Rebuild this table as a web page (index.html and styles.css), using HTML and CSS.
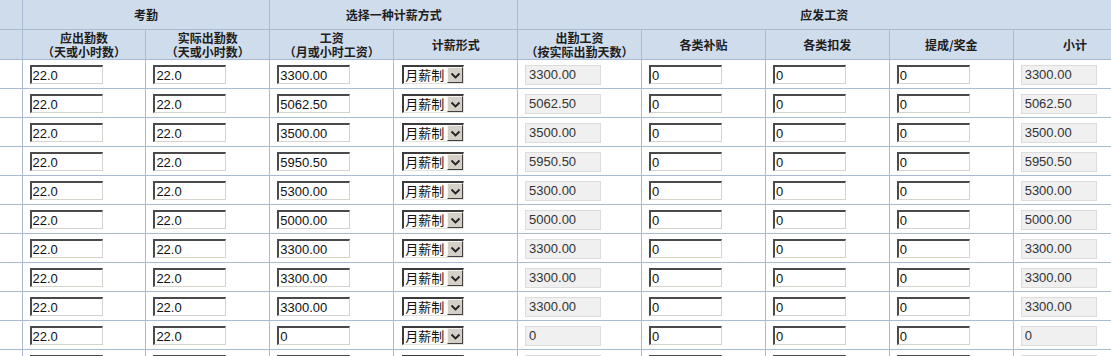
FILE: index.html
```html
<!DOCTYPE html>
<html lang="zh-CN">
<head>
<meta charset="utf-8">
<title>工资表</title>
<link rel="stylesheet" href="styles.css">
</head>
<body>
<table class="pay">
  <colgroup>
    <col class="c-first">
    <col class="c-std"><col class="c-std"><col class="c-std"><col class="c-std">
    <col class="c-std"><col class="c-std"><col class="c-std"><col class="c-std"><col class="c-std">
  </colgroup>
  <thead>
    <tr class="h1">
      <th class="first"></th>
      <th colspan="2">考勤</th>
      <th colspan="2">选择一种计薪方式</th>
      <th colspan="5" class="pay-title"><span>应发工资</span></th>
    </tr>
    <tr class="h2">
      <th class="first"></th>
      <th>应出勤数<br>（天或小时数）</th>
      <th>实际出勤数<br>（天或小时数）</th>
      <th>工资<br>（月或小时工资）</th>
      <th>计薪形式</th>
      <th>出勤工资<br>（按实际出勤天数）</th>
      <th>各类补贴</th>
      <th>各类扣发</th>
      <th>提成/奖金</th>
      <th>小计</th>
    </tr>
  </thead>
  <tbody>
    <tr>
      <td class="first"></td>
      <td><input class="in" value="22.0"></td>
      <td><input class="in" value="22.0"></td>
      <td><input class="in" value="3300.00"></td>
      <td><span class="sel"><span class="sel-text">月薪制</span><span class="sel-btn"><svg width="11" height="7" viewBox="0 0 11 7"><path d="M1.5 1.5 L5.5 5.5 L9.5 1.5" fill="none" stroke="#222" stroke-width="1.8"/></svg></span></span></td>
      <td><input class="in ro" value="3300.00" readonly></td>
      <td><input class="in" value="0"></td>
      <td><input class="in" value="0"></td>
      <td><input class="in" value="0"></td>
      <td><input class="in ro" value="3300.00" readonly></td>
    </tr>
    <tr>
      <td class="first"></td>
      <td><input class="in" value="22.0"></td>
      <td><input class="in" value="22.0"></td>
      <td><input class="in" value="5062.50"></td>
      <td><span class="sel"><span class="sel-text">月薪制</span><span class="sel-btn"><svg width="11" height="7" viewBox="0 0 11 7"><path d="M1.5 1.5 L5.5 5.5 L9.5 1.5" fill="none" stroke="#222" stroke-width="1.8"/></svg></span></span></td>
      <td><input class="in ro" value="5062.50" readonly></td>
      <td><input class="in" value="0"></td>
      <td><input class="in" value="0"></td>
      <td><input class="in" value="0"></td>
      <td><input class="in ro" value="5062.50" readonly></td>
    </tr>
    <tr>
      <td class="first"></td>
      <td><input class="in" value="22.0"></td>
      <td><input class="in" value="22.0"></td>
      <td><input class="in" value="3500.00"></td>
      <td><span class="sel"><span class="sel-text">月薪制</span><span class="sel-btn"><svg width="11" height="7" viewBox="0 0 11 7"><path d="M1.5 1.5 L5.5 5.5 L9.5 1.5" fill="none" stroke="#222" stroke-width="1.8"/></svg></span></span></td>
      <td><input class="in ro" value="3500.00" readonly></td>
      <td><input class="in" value="0"></td>
      <td><input class="in" value="0"></td>
      <td><input class="in" value="0"></td>
      <td><input class="in ro" value="3500.00" readonly></td>
    </tr>
    <tr>
      <td class="first"></td>
      <td><input class="in" value="22.0"></td>
      <td><input class="in" value="22.0"></td>
      <td><input class="in" value="5950.50"></td>
      <td><span class="sel"><span class="sel-text">月薪制</span><span class="sel-btn"><svg width="11" height="7" viewBox="0 0 11 7"><path d="M1.5 1.5 L5.5 5.5 L9.5 1.5" fill="none" stroke="#222" stroke-width="1.8"/></svg></span></span></td>
      <td><input class="in ro" value="5950.50" readonly></td>
      <td><input class="in" value="0"></td>
      <td><input class="in" value="0"></td>
      <td><input class="in" value="0"></td>
      <td><input class="in ro" value="5950.50" readonly></td>
    </tr>
    <tr>
      <td class="first"></td>
      <td><input class="in" value="22.0"></td>
      <td><input class="in" value="22.0"></td>
      <td><input class="in" value="5300.00"></td>
      <td><span class="sel"><span class="sel-text">月薪制</span><span class="sel-btn"><svg width="11" height="7" viewBox="0 0 11 7"><path d="M1.5 1.5 L5.5 5.5 L9.5 1.5" fill="none" stroke="#222" stroke-width="1.8"/></svg></span></span></td>
      <td><input class="in ro" value="5300.00" readonly></td>
      <td><input class="in" value="0"></td>
      <td><input class="in" value="0"></td>
      <td><input class="in" value="0"></td>
      <td><input class="in ro" value="5300.00" readonly></td>
    </tr>
    <tr>
      <td class="first"></td>
      <td><input class="in" value="22.0"></td>
      <td><input class="in" value="22.0"></td>
      <td><input class="in" value="5000.00"></td>
      <td><span class="sel"><span class="sel-text">月薪制</span><span class="sel-btn"><svg width="11" height="7" viewBox="0 0 11 7"><path d="M1.5 1.5 L5.5 5.5 L9.5 1.5" fill="none" stroke="#222" stroke-width="1.8"/></svg></span></span></td>
      <td><input class="in ro" value="5000.00" readonly></td>
      <td><input class="in" value="0"></td>
      <td><input class="in" value="0"></td>
      <td><input class="in" value="0"></td>
      <td><input class="in ro" value="5000.00" readonly></td>
    </tr>
    <tr>
      <td class="first"></td>
      <td><input class="in" value="22.0"></td>
      <td><input class="in" value="22.0"></td>
      <td><input class="in" value="3300.00"></td>
      <td><span class="sel"><span class="sel-text">月薪制</span><span class="sel-btn"><svg width="11" height="7" viewBox="0 0 11 7"><path d="M1.5 1.5 L5.5 5.5 L9.5 1.5" fill="none" stroke="#222" stroke-width="1.8"/></svg></span></span></td>
      <td><input class="in ro" value="3300.00" readonly></td>
      <td><input class="in" value="0"></td>
      <td><input class="in" value="0"></td>
      <td><input class="in" value="0"></td>
      <td><input class="in ro" value="3300.00" readonly></td>
    </tr>
    <tr>
      <td class="first"></td>
      <td><input class="in" value="22.0"></td>
      <td><input class="in" value="22.0"></td>
      <td><input class="in" value="3300.00"></td>
      <td><span class="sel"><span class="sel-text">月薪制</span><span class="sel-btn"><svg width="11" height="7" viewBox="0 0 11 7"><path d="M1.5 1.5 L5.5 5.5 L9.5 1.5" fill="none" stroke="#222" stroke-width="1.8"/></svg></span></span></td>
      <td><input class="in ro" value="3300.00" readonly></td>
      <td><input class="in" value="0"></td>
      <td><input class="in" value="0"></td>
      <td><input class="in" value="0"></td>
      <td><input class="in ro" value="3300.00" readonly></td>
    </tr>
    <tr>
      <td class="first"></td>
      <td><input class="in" value="22.0"></td>
      <td><input class="in" value="22.0"></td>
      <td><input class="in" value="3300.00"></td>
      <td><span class="sel"><span class="sel-text">月薪制</span><span class="sel-btn"><svg width="11" height="7" viewBox="0 0 11 7"><path d="M1.5 1.5 L5.5 5.5 L9.5 1.5" fill="none" stroke="#222" stroke-width="1.8"/></svg></span></span></td>
      <td><input class="in ro" value="3300.00" readonly></td>
      <td><input class="in" value="0"></td>
      <td><input class="in" value="0"></td>
      <td><input class="in" value="0"></td>
      <td><input class="in ro" value="3300.00" readonly></td>
    </tr>
    <tr>
      <td class="first"></td>
      <td><input class="in" value="22.0"></td>
      <td><input class="in" value="22.0"></td>
      <td><input class="in" value="0"></td>
      <td><span class="sel"><span class="sel-text">月薪制</span><span class="sel-btn"><svg width="11" height="7" viewBox="0 0 11 7"><path d="M1.5 1.5 L5.5 5.5 L9.5 1.5" fill="none" stroke="#222" stroke-width="1.8"/></svg></span></span></td>
      <td><input class="in ro" value="0" readonly></td>
      <td><input class="in" value="0"></td>
      <td><input class="in" value="0"></td>
      <td><input class="in" value="0"></td>
      <td><input class="in ro" value="0" readonly></td>
    </tr>
    <tr>
      <td class="first"></td>
      <td><input class="in" value="22.0"></td>
      <td><input class="in" value="22.0"></td>
      <td><input class="in" value="3300.00"></td>
      <td><span class="sel"><span class="sel-text">月薪制</span><span class="sel-btn"><svg width="11" height="7" viewBox="0 0 11 7"><path d="M1.5 1.5 L5.5 5.5 L9.5 1.5" fill="none" stroke="#222" stroke-width="1.8"/></svg></span></span></td>
      <td><input class="in ro" value="3300.00" readonly></td>
      <td><input class="in" value="0"></td>
      <td><input class="in" value="0"></td>
      <td><input class="in" value="0"></td>
      <td><input class="in ro" value="3300.00" readonly></td>
    </tr>
  </tbody>
</table>
</body>
</html>
```

FILE: styles.css
```css
html, body {
  margin: 0;
  padding: 0;
  overflow: hidden;
  background: #ffffff;
}

body {
  font-family: "Liberation Sans", "Noto Sans CJK SC", sans-serif;
  font-size: 13px;
  color: #222;
}

.pay {
  border-collapse: collapse;
  table-layout: fixed;
  width: 1137px;
}

.c-first { width: 22px; }
.c-std { width: 123.9px; }

.pay th,
.pay td {
  border: 1px solid #a9bbd2;
  padding: 0;
}

.pay th.first,
.pay td.first {
  border-left: none;
}

.pay .h1 th { border-top: none; }

.pay th {
  background: #cfdcec;
  font-family: "Noto Sans CJK SC", "Liberation Sans", sans-serif;
  font-weight: bold;
  font-size: 12px;
  line-height: 14px;
  color: #1e1e1e;
  text-align: center;
  vertical-align: middle;
}

.h1 th { height: 29px; }
.h2 th { height: 29px; }

.pay-title span {
  display: inline-block;
  margin-right: 6px;
}

.pay td {
  height: 28px;
  padding-left: 7px;
  vertical-align: middle;
  white-space: nowrap;
}

.pay td.first { padding-left: 0; }

.in {
  box-sizing: border-box;
  display: block;
  width: 73px;
  height: 19px;
  margin: 1px 0 0;
  padding: 0 0 0 1px;
  font-family: "Liberation Sans", Arial, sans-serif;
  font-size: 13px;
  color: #111;
  background: #fff;
  border-top: 2px solid #4a4a4a;
  border-left: 2px solid #4a4a4a;
  border-right: 1px solid #d6d3cc;
  border-bottom: 1px solid #d6d3cc;
  outline: none;
}

.in.ro {
  width: 76px;
  height: 20px;
  padding-left: 3px;
  background: #f0f0f0;
  color: #333;
  border: 1px solid #dcdcdc;
}

.sel {
  box-sizing: border-box;
  display: flex;
  align-items: center;
  width: 62px;
  height: 19px;
  margin: 1px 0 0 1px;
  background: #fff;
  border-top: 2px solid #3c3c3c;
  border-left: 2px solid #3c3c3c;
  border-right: 1px solid #e4e2dc;
  border-bottom: 1px solid #e4e2dc;
  font-family: "Noto Sans CJK SC", "Liberation Sans", sans-serif;
  font-size: 13px;
  line-height: 16px;
  color: #111;
}

.sel-text {
  flex: 1;
  padding-left: 1px;
  white-space: nowrap;
}

.sel-btn {
  box-sizing: border-box;
  flex: none;
  display: flex;
  align-items: center;
  justify-content: center;
  width: 16px;
  height: 16px;
  background: #d4d0c8;
  border-top: 1px solid #f4f3ee;
  border-left: 1px solid #f4f3ee;
  border-right: 1px solid #404040;
  border-bottom: 1px solid #404040;
}
```
